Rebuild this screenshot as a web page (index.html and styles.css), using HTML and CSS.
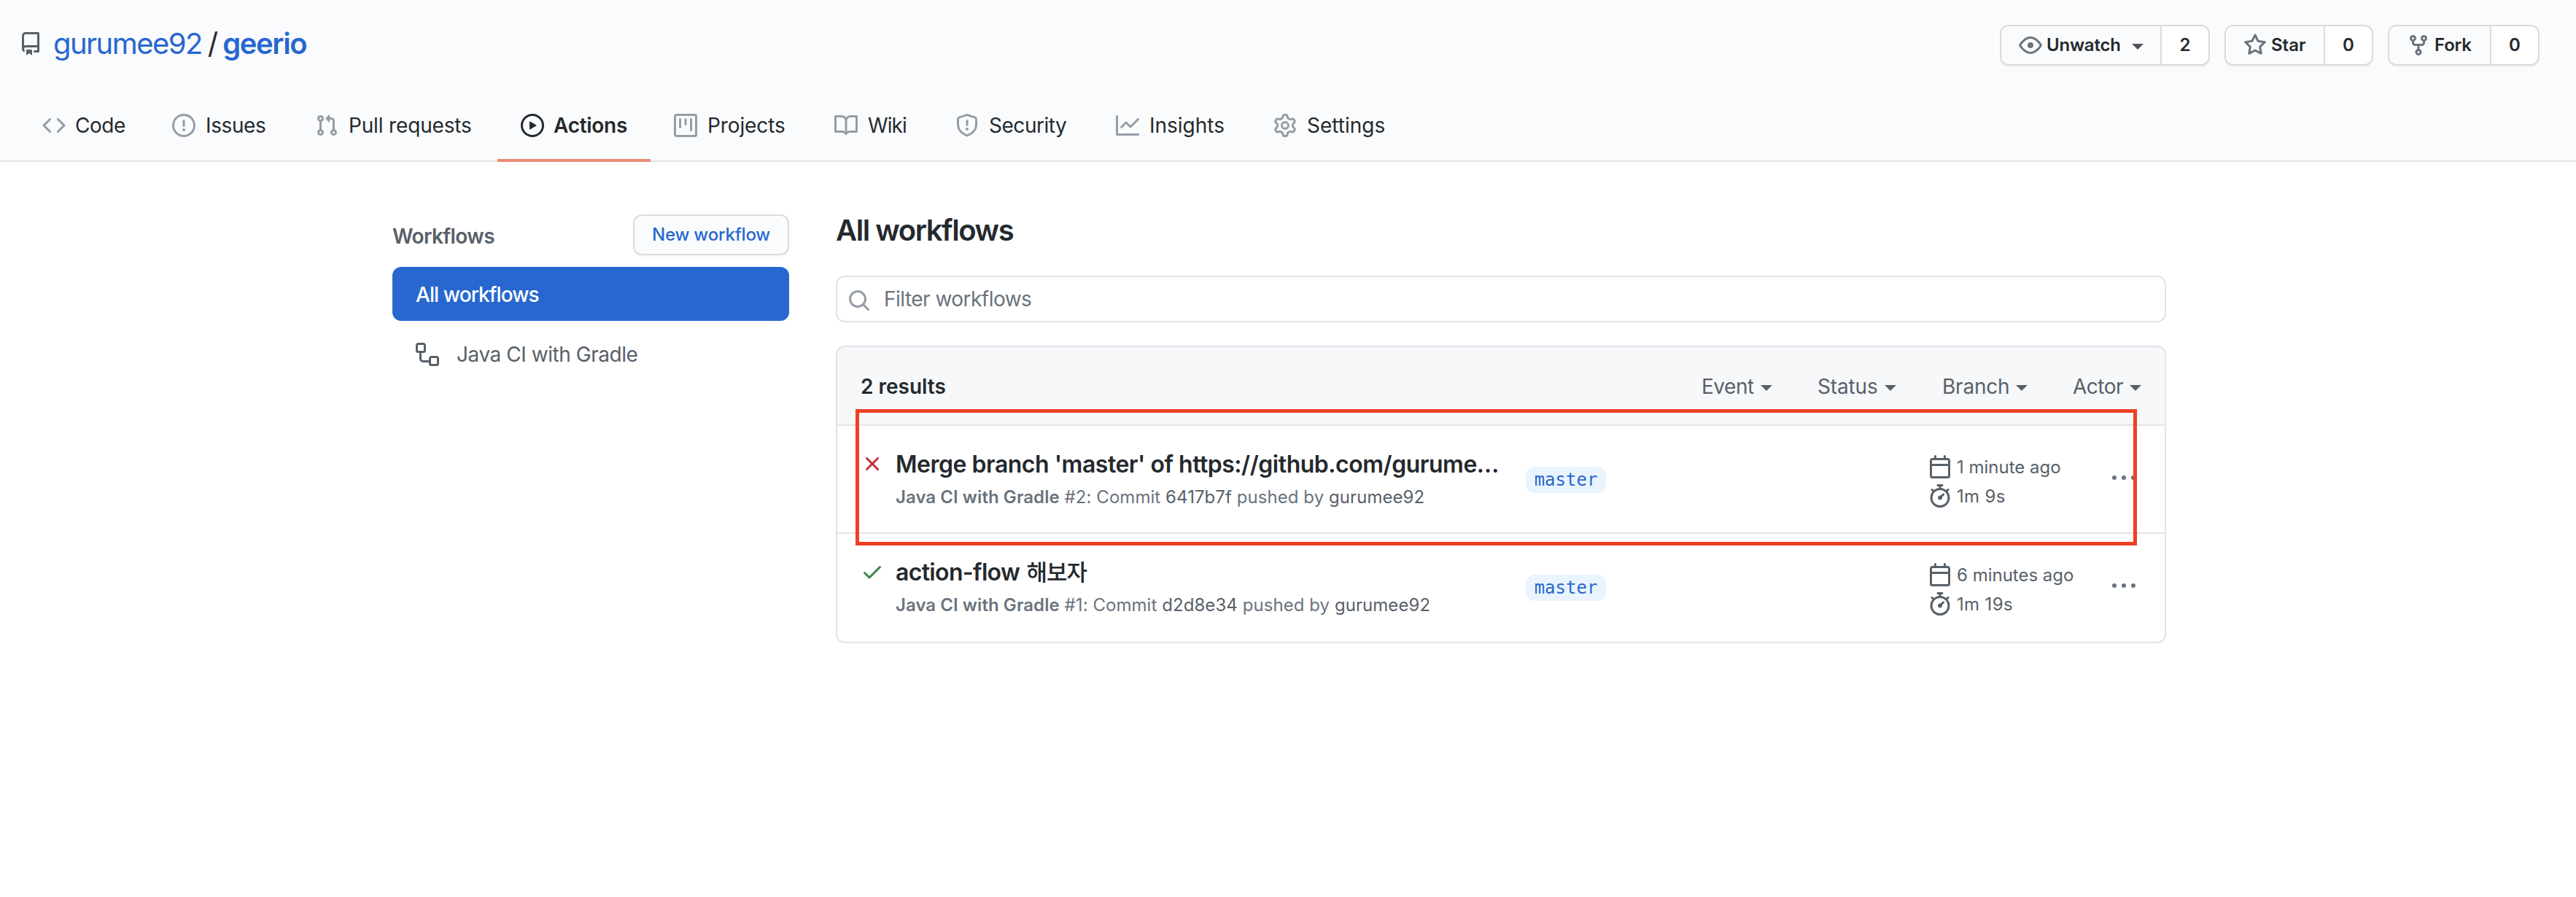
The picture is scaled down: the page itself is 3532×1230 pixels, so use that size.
FILE: index.html
```html
<!DOCTYPE html>
<html lang="en">
<head>
<meta charset="utf-8">
<title>Actions · gurumee92/geerio</title>
<link rel="stylesheet" href="styles.css">
</head>
<body>
<header class="repo-header">
  <div class="repo-top">
    <h1 class="repo-title">
      <svg class="icon" viewBox="0 0 16 16"><path fill-rule="evenodd" d="M2 2.5A2.5 2.5 0 014.5 0h8.75a.75.75 0 01.75.75v12.5a.75.75 0 01-.75.75h-2.5a.75.75 0 110-1.5h1.75v-2h-8a1 1 0 00-.714 1.7.75.75 0 01-1.072 1.05A2.495 2.495 0 012 11.5v-9zm10.5-1V9h-8c-.356 0-.694.074-1 .208V2.5a1 1 0 011-1h8zM5 12.25v3.25a.25.25 0 00.4.2l1.45-1.087a.25.25 0 01.3 0L8.6 15.7a.25.25 0 00.4-.2v-3.25a.25.25 0 00-.25-.25h-3.5a.25.25 0 00-.25.25z"/></svg>
      <a class="owner">gurumee92</a><span class="slash">/</span><a class="name">geerio</a>
    </h1>
    <div class="repo-actions">
      <div class="btn-pair">
        <button class="btn-main watch"><svg class="icon" viewBox="0 0 16 16"><path fill-rule="evenodd" d="M1.679 7.932c.412-.621 1.242-1.75 2.366-2.717C5.175 4.242 6.527 3.5 8 3.5c1.473 0 2.824.742 3.955 1.715 1.124.967 1.954 2.096 2.366 2.717a.119.119 0 010 .136c-.412.621-1.242 1.75-2.366 2.717C10.825 11.758 9.473 12.5 8 12.5c-1.473 0-2.824-.742-3.955-1.715C2.92 9.818 2.09 8.69 1.679 8.068a.119.119 0 010-.136zM8 2c-1.981 0-3.67.992-4.933 2.078C1.797 5.169.88 6.423.43 7.1a1.619 1.619 0 000 1.798c.45.678 1.367 1.932 2.637 3.024C4.329 13.008 6.019 14 8 14c1.981 0 3.67-.992 4.933-2.078 1.27-1.091 2.187-2.345 2.637-3.023a1.619 1.619 0 000-1.798c-.45-.678-1.367-1.932-2.637-3.023C11.671 2.992 9.981 2 8 2zm0 8a2 2 0 100-4 2 2 0 000 4z"/></svg><span>Unwatch</span><i class="caret"></i></button>
        <a class="btn-count">2</a>
      </div>
      <div class="btn-pair">
        <button class="btn-main star"><svg class="icon" viewBox="0 0 16 16"><path fill-rule="evenodd" d="M8 .25a.75.75 0 01.673.418l1.882 3.815 4.21.612a.75.75 0 01.416 1.279l-3.046 2.97.719 4.192a.75.75 0 01-1.088.791L8 12.347l-3.766 1.98a.75.75 0 01-1.088-.79l.72-4.194L.818 6.374a.75.75 0 01.416-1.28l4.21-.611L7.327.668A.75.75 0 018 .25zm0 2.445L6.615 5.5a.75.75 0 01-.564.41l-3.097.45 2.24 2.184a.75.75 0 01.216.664l-.528 3.084 2.769-1.456a.75.75 0 01.698 0l2.77 1.456-.53-3.084a.75.75 0 01.216-.664l2.24-2.183-3.096-.45a.75.75 0 01-.564-.41L8 2.694v.001z"/></svg><span>Star</span></button>
        <a class="btn-count">0</a>
      </div>
      <div class="btn-pair">
        <button class="btn-main fork"><svg class="icon" viewBox="0 0 16 16"><path fill-rule="evenodd" d="M5 3.25a.75.75 0 11-1.5 0 .75.75 0 011.5 0zm0 2.122a2.25 2.25 0 10-1.5 0v.878A2.25 2.25 0 005.75 8.5h1.5v2.128a2.251 2.251 0 101.5 0V8.5h1.5a2.25 2.25 0 002.25-2.25v-.878a2.25 2.25 0 10-1.5 0v.878a.75.75 0 01-.75.75h-4.5A.75.75 0 015 6.25v-.878zm3.75 7.378a.75.75 0 11-1.5 0 .75.75 0 011.5 0zm3-8.75a.75.75 0 100-1.5.75.75 0 000 1.5z"/></svg><span>Fork</span></button>
        <a class="btn-count">0</a>
      </div>
    </div>
  </div>
  <nav class="tabs">
    <a class="tab tab-code"><svg class="icon" viewBox="0 0 16 16"><path fill-rule="evenodd" d="M4.72 3.22a.75.75 0 011.06 1.06L2.06 8l3.72 3.72a.75.75 0 11-1.06 1.06L.47 8.53a.75.75 0 010-1.06l4.25-4.25zm6.56 0a.75.75 0 10-1.06 1.06L13.94 8l-3.72 3.72a.75.75 0 101.06 1.06l4.25-4.25a.75.75 0 000-1.06l-4.25-4.25z"/></svg><span>Code</span></a>
    <a class="tab tab-issues"><svg class="icon" viewBox="0 0 16 16"><path fill-rule="evenodd" d="M8 1.5a6.5 6.5 0 100 13 6.5 6.5 0 000-13zM0 8a8 8 0 1116 0A8 8 0 010 8zm9 3a1 1 0 11-2 0 1 1 0 012 0zm-.25-6.25a.75.75 0 00-1.5 0v3.5a.75.75 0 001.5 0v-3.5z"/></svg><span>Issues</span></a>
    <a class="tab tab-pulls"><svg class="icon" viewBox="0 0 16 16"><path fill-rule="evenodd" d="M7.177 3.073L9.573.677A.25.25 0 0110 .854v4.792a.25.25 0 01-.427.177L7.177 3.427a.25.25 0 010-.354zM3.75 2.5a.75.75 0 100 1.5.75.75 0 000-1.5zm-2.25.75a2.25 2.25 0 113 2.122v5.256a2.251 2.251 0 11-1.5 0V5.372A2.25 2.25 0 011.5 3.25zM11 2.5h-1V4h1a1 1 0 011 1v5.628a2.251 2.251 0 101.5 0V5A2.5 2.5 0 0011 2.5zm1 10.25a.75.75 0 111.5 0 .75.75 0 01-1.5 0zM3.75 12a.75.75 0 100 1.5.75.75 0 000-1.5z"/></svg><span>Pull requests</span></a>
    <a class="tab tab-actions selected"><svg class="icon" viewBox="0 0 16 16"><path fill-rule="evenodd" d="M1.5 8a6.5 6.5 0 1113 0 6.5 6.5 0 01-13 0zM8 0a8 8 0 100 16A8 8 0 008 0zM6.379 5.227A.25.25 0 006 5.442v5.117a.25.25 0 00.379.214l4.264-2.559a.25.25 0 000-.428L6.379 5.227z"/></svg><span>Actions</span></a>
    <a class="tab tab-projects"><svg class="icon" viewBox="0 0 16 16"><path fill-rule="evenodd" d="M1.75 0A1.75 1.75 0 000 1.75v12.5C0 15.216.784 16 1.75 16h12.5A1.75 1.75 0 0016 14.25V1.75A1.75 1.75 0 0014.25 0H1.75zM1.5 1.75a.25.25 0 01.25-.25h12.5a.25.25 0 01.25.25v12.5a.25.25 0 01-.25.25H1.75a.25.25 0 01-.25-.25V1.75zM11.75 3a.75.75 0 00-.75.75v7.5a.75.75 0 001.5 0v-7.5a.75.75 0 00-.75-.75zm-8.25.75a.75.75 0 011.5 0v5.5a.75.75 0 01-1.5 0v-5.5zM8 3a.75.75 0 00-.75.75v3.5a.75.75 0 001.5 0v-3.5A.75.75 0 008 3z"/></svg><span>Projects</span></a>
    <a class="tab tab-wiki"><svg class="icon" viewBox="0 0 16 16"><path fill-rule="evenodd" d="M0 1.75A.75.75 0 01.75 1h4.253c1.227 0 2.317.59 3 1.501A3.744 3.744 0 0111.006 1h4.245a.75.75 0 01.75.75v10.5a.75.75 0 01-.75.75h-4.507a2.25 2.25 0 00-1.591.659l-.622.621a.75.75 0 01-1.06 0l-.622-.621A2.25 2.25 0 005.258 13H.75a.75.75 0 01-.75-.75V1.75zm8.755 3a2.25 2.25 0 012.25-2.25H14.5v9h-3.757c-.71 0-1.4.201-1.992.572l.004-7.322zm-1.504 7.324l.004-5.073-.002-2.253A2.25 2.25 0 005.003 2.5H1.5v9h3.757a3.75 3.75 0 011.994.574z"/></svg><span>Wiki</span></a>
    <a class="tab tab-security"><svg class="icon" viewBox="0 0 16 16"><path fill-rule="evenodd" d="M7.467.133a1.75 1.75 0 011.066 0l5.25 1.68A1.75 1.75 0 0115 3.48V7c0 1.566-.32 3.182-1.303 4.682-.983 1.498-2.585 2.813-5.032 3.855a1.7 1.7 0 01-1.33 0c-2.447-1.042-4.049-2.357-5.032-3.855C1.32 10.182 1 8.566 1 7V3.48a1.75 1.75 0 011.217-1.667l5.25-1.68zm.61 1.429a.25.25 0 00-.153 0l-5.25 1.68a.25.25 0 00-.174.238V7c0 1.358.275 2.666 1.057 3.86.784 1.194 2.121 2.34 4.366 3.297a.2.2 0 00.154 0c2.245-.956 3.582-2.104 4.366-3.298C13.225 9.666 13.5 8.36 13.5 7V3.48a.25.25 0 00-.174-.237l-5.25-1.68zM9 10.5a1 1 0 11-2 0 1 1 0 012 0zm-.25-5.75a.75.75 0 10-1.5 0v3a.75.75 0 001.5 0v-3z"/></svg><span>Security</span></a>
    <a class="tab tab-insights"><svg class="icon" viewBox="0 0 16 16"><path fill-rule="evenodd" d="M1.5 1.75a.75.75 0 00-1.5 0v12.5c0 .414.336.75.75.75h14.5a.75.75 0 000-1.5H1.5V1.75zm14.28 2.53a.75.75 0 00-1.06-1.06L10 7.94 7.53 5.47a.75.75 0 00-1.06 0L3.22 8.72a.75.75 0 001.06 1.06L7 7.06l2.47 2.47a.75.75 0 001.06 0l5.25-5.25z"/></svg><span>Insights</span></a>
    <a class="tab tab-settings"><svg class="icon" viewBox="0 0 16 16"><path fill-rule="evenodd" d="M7.429 1.525a6.593 6.593 0 011.142 0c.036.003.108.036.137.146l.289 1.105c.147.56.55.967.997 1.189.174.086.341.183.501.29.417.278.97.423 1.53.27l1.102-.303c.11-.03.175.016.195.046.219.31.41.641.573.989.014.031.022.11-.059.19l-.815.806c-.411.406-.562.957-.53 1.456a4.588 4.588 0 010 .582c-.032.499.119 1.05.53 1.456l.815.806c.08.08.073.159.059.19a6.494 6.494 0 01-.573.99c-.02.029-.086.074-.195.045l-1.103-.303c-.559-.153-1.112-.008-1.529.27-.16.107-.327.204-.5.29-.449.222-.851.628-.998 1.189l-.289 1.105c-.029.11-.101.143-.137.146a6.613 6.613 0 01-1.142 0c-.036-.003-.108-.037-.137-.146l-.289-1.105c-.147-.56-.55-.967-.997-1.189a4.502 4.502 0 01-.501-.29c-.417-.278-.97-.423-1.53-.27l-1.102.303c-.11.03-.175-.016-.195-.046a6.492 6.492 0 01-.573-.989c-.014-.031-.022-.11.059-.19l.815-.806c.411-.406.562-.957.53-1.456a4.587 4.587 0 010-.582c.032-.499-.119-1.05-.53-1.456l-.815-.806c-.08-.08-.073-.159-.059-.19a6.44 6.44 0 01.573-.99c.02-.029.086-.075.195-.045l1.103.303c.559.153 1.112.008 1.529-.27.16-.107.327-.204.5-.29.449-.222.851-.628.998-1.189l.289-1.105c.029-.11.101-.143.137-.146zM8 0c-.236 0-.47.01-.701.03-.743.065-1.29.615-1.458 1.261l-.29 1.106c-.017.066-.078.158-.211.224a5.994 5.994 0 00-.668.386c-.123.082-.233.09-.3.071L3.27 2.776c-.644-.177-1.392.02-1.82.63a7.977 7.977 0 00-.704 1.217c-.315.675-.111 1.422.363 1.891l.815.806c.05.048.098.147.088.294a6.084 6.084 0 000 .772c.01.147-.038.246-.088.294l-.815.806c-.474.469-.678 1.216-.363 1.891.2.428.436.835.704 1.218.428.609 1.176.806 1.82.63l1.103-.303c.066-.019.176-.011.299.071.213.143.436.272.668.386.133.066.194.158.212.224l.289 1.106c.169.646.715 1.196 1.458 1.26a8.094 8.094 0 001.402 0c.743-.064 1.29-.614 1.458-1.26l.29-1.106c.017-.066.078-.158.211-.224a5.98 5.98 0 00.668-.386c.123-.082.233-.09.3-.071l1.102.302c.644.177 1.392-.02 1.82-.63.268-.382.505-.789.704-1.217.315-.675.111-1.422-.364-1.891l-.814-.806c-.05-.048-.098-.147-.088-.294a6.1 6.1 0 000-.772c-.01-.147.039-.246.088-.294l.814-.806c.475-.469.679-1.216.364-1.891a7.992 7.992 0 00-.704-1.218c-.428-.609-1.176-.806-1.82-.63l-1.103.303c-.066.019-.176.011-.299-.071a5.991 5.991 0 00-.668-.386c-.133-.066-.194-.158-.212-.224L10.16 1.29C9.99.645 9.444.095 8.701.031A8.094 8.094 0 008 0zm1.5 8a1.5 1.5 0 11-3 0 1.5 1.5 0 013 0zM11 8a3 3 0 11-6 0 3 3 0 016 0z"/></svg><span>Settings</span></a>
  </nav>
</header>

<div class="layout">
  <aside class="sidebar">
    <div class="sidebar-head"><h3 class="side-title">Workflows</h3><button class="new-btn"><span>New workflow</span></button></div>
    <a class="side-item active"><span>All workflows</span></a>
    <a class="side-item sub"><svg class="icon" viewBox="0 0 16 16"><path fill-rule="evenodd" d="M0 1.75C0 .784.784 0 1.75 0h3.5C6.216 0 7 .784 7 1.75v3.5A1.75 1.75 0 015.25 7H4v4a1 1 0 001 1h4v-1.25C9 9.784 9.784 9 10.75 9h3.5c.966 0 1.75.784 1.75 1.75v3.5A1.75 1.75 0 0114.25 16h-3.5A1.75 1.75 0 019 14.25v-.75H5A2.5 2.5 0 012.5 11V7h-.75A1.75 1.75 0 010 5.25v-3.5zm1.75-.25a.25.25 0 00-.25.25v3.5c0 .138.112.25.25.25h3.5a.25.25 0 00.25-.25v-3.5a.25.25 0 00-.25-.25h-3.5zm9 9a.25.25 0 00-.25.25v3.5c0 .138.112.25.25.25h3.5a.25.25 0 00.25-.25v-3.5a.25.25 0 00-.25-.25h-3.5z"/></svg><span>Java CI with Gradle</span></a>
  </aside>
  <main class="content">
    <h2 class="page-title">All workflows</h2>
    <div class="search"><svg class="icon" viewBox="0 0 16 16"><path fill-rule="evenodd" d="M11.5 7a4.499 4.499 0 11-8.998 0A4.499 4.499 0 0111.5 7zm-.82 4.74a6 6 0 111.06-1.06l3.04 3.04a.75.75 0 11-1.06 1.06l-3.04-3.04z"/></svg><span>Filter workflows</span></div>
    <section class="runs">
      <div class="runs-head">
        <strong class="results">2 results</strong>
        <div class="filters">
          <a class="filter event"><span>Event</span><i class="caret"></i></a>
          <a class="filter status"><span>Status</span><i class="caret"></i></a>
          <a class="filter branch-filter"><span>Branch</span><i class="caret"></i></a>
          <a class="filter actor"><span>Actor</span><i class="caret"></i></a>
        </div>
      </div>
      <div class="run">
        <svg class="icon state failed" viewBox="0 0 16 16"><path fill-rule="evenodd" d="M3.72 3.72a.75.75 0 011.06 0L8 6.94l3.22-3.22a.75.75 0 111.06 1.06L9.06 8l3.22 3.22a.75.75 0 11-1.06 1.06L8 9.06l-3.22 3.22a.75.75 0 01-1.06-1.06L6.94 8 3.72 4.78a.75.75 0 010-1.06z"/></svg>
        <div class="run-info">
          <a class="run-title">Merge branch 'master' of https://github.com/gurume…</a>
          <div class="run-sub"><b>Java CI with Gradle</b> #2: Commit <a>6417b7f</a> pushed by <a>gurumee92</a></div>
        </div>
        <a class="branch">master</a>
        <div class="times">
          <div class="time"><svg class="icon" viewBox="0 0 16 16"><path fill-rule="evenodd" d="M4.75 0a.75.75 0 01.75.75V2h5V.75a.75.75 0 011.5 0V2h1.25c.966 0 1.75.784 1.75 1.75v10.5A1.75 1.75 0 0113.25 16H2.75A1.75 1.75 0 011 14.25V3.75C1 2.784 1.784 2 2.75 2H4V.75A.75.75 0 014.75 0zm0 3.5h8.5a.25.25 0 01.25.25V6h-11V3.75a.25.25 0 01.25-.25h2zm-2.25 4v6.75c0 .138.112.25.25.25h10.5a.25.25 0 00.25-.25V7.5h-11z"/></svg><span>1 minute ago</span></div>
          <div class="time duration"><svg class="icon" viewBox="0 0 16 16"><path fill-rule="evenodd" d="M5.75.75A.75.75 0 016.5 0h3a.75.75 0 010 1.5h-.75v1l-.001.041a6.718 6.718 0 013.464 1.435l.007-.006.75-.75a.75.75 0 111.06 1.06l-.75.75-.006.007a6.75 6.75 0 11-10.548 0L2.72 5.03l-.75-.75a.75.75 0 011.06-1.06l.75.75.007.006A6.718 6.718 0 017.25 2.541V1.5H6.5a.75.75 0 01-.75-.75zM8 14.5A5.25 5.25 0 108 4a5.25 5.25 0 000 10.500zm.389-6.7l1.33-1.33a.75.75 0 111.061 1.06L9.45 8.861A1.502 1.502 0 018 10.75a1.5 1.5 0 11.389-2.95z"/></svg><span>1m 9s</span></div>
        </div>
        <svg class="icon kebab" viewBox="0 0 16 16"><circle cx="1.5" cy="7.5" r="1.5"/><circle cx="8" cy="7.5" r="1.5"/><circle cx="14.5" cy="7.5" r="1.5"/></svg>
      </div>
      <div class="run">
        <svg class="icon state passed" viewBox="0 0 16 16"><path fill-rule="evenodd" d="M13.78 4.22a.75.75 0 010 1.06l-7.25 7.25a.75.75 0 01-1.06 0L2.22 9.28a.75.75 0 011.06-1.06L6 10.94l6.72-6.72a.75.75 0 011.06 0z"/></svg>
        <div class="run-info">
          <a class="run-title mixed">action-flow <span class="ko" lang="ko">해보자</span></a>
          <div class="run-sub"><b>Java CI with Gradle</b> #1: Commit <a>d2d8e34</a> pushed by <a>gurumee92</a></div>
        </div>
        <a class="branch">master</a>
        <div class="times">
          <div class="time"><svg class="icon" viewBox="0 0 16 16"><path fill-rule="evenodd" d="M4.75 0a.75.75 0 01.75.75V2h5V.75a.75.75 0 011.5 0V2h1.25c.966 0 1.75.784 1.75 1.75v10.5A1.75 1.75 0 0113.25 16H2.75A1.75 1.75 0 011 14.25V3.75C1 2.784 1.784 2 2.75 2H4V.75A.75.75 0 014.75 0zm0 3.5h8.5a.25.25 0 01.25.25V6h-11V3.75a.25.25 0 01.25-.25h2zm-2.25 4v6.75c0 .138.112.25.25.25h10.5a.25.25 0 00.25-.25V7.5h-11z"/></svg><span>6 minutes ago</span></div>
          <div class="time duration"><svg class="icon" viewBox="0 0 16 16"><path fill-rule="evenodd" d="M5.75.75A.75.75 0 016.5 0h3a.75.75 0 010 1.5h-.75v1l-.001.041a6.718 6.718 0 013.464 1.435l.007-.006.75-.75a.75.75 0 111.06 1.06l-.75.75-.006.007a6.75 6.75 0 11-10.548 0L2.72 5.03l-.75-.75a.75.75 0 011.06-1.06l.75.75.007.006A6.718 6.718 0 017.25 2.541V1.5H6.5a.75.75 0 01-.75-.75zM8 14.5A5.25 5.25 0 108 4a5.25 5.25 0 000 10.500zm.389-6.7l1.33-1.33a.75.75 0 111.061 1.06L9.45 8.861A1.502 1.502 0 018 10.75a1.5 1.5 0 11.389-2.95z"/></svg><span>1m 19s</span></div>
        </div>
        <svg class="icon kebab" viewBox="0 0 16 16"><circle cx="1.5" cy="7.5" r="1.5"/><circle cx="8" cy="7.5" r="1.5"/><circle cx="14.5" cy="7.5" r="1.5"/></svg>
      </div>
      <div class="highlight"></div>
    </section>
  </main>
</div>
</body>
</html>
```
FILE: styles.css
```css
* { box-sizing: border-box; }
body { margin: 0; min-height: 1230px; background: #fff; color: #24292e; font: 28px/42px Inter, "Noto Sans CJK KR", sans-serif; }
h1, h2, h3 { margin: 0; }
button { font: inherit; color: inherit; }
.icon { width: 32px; height: 32px; flex: none; fill: currentColor; display: block; }
.caret { width: 0; height: 0; border: 8px solid transparent; border-top-color: currentColor; border-bottom: 0; }

.repo-header { height: 222px; background: #fafbfc; border-bottom: 2px solid #e1e4e8; display: flex; flex-direction: column; justify-content: space-between; }
.repo-top { display: flex; justify-content: space-between; padding: 34px 50px 0 26px; }
.repo-title { display: flex; align-items: center; height: 52px; font-size: 40px; font-weight: 400; color: #24292e; }
.repo-title .icon { color: #586069; margin-right: 15px; }
.owner, .name { color: #2767cf; }
.owner { letter-spacing: -1.55px; }
.name { font-weight: 600; letter-spacing: -1.4px; }
.slash { margin: 0 6px 0 8px; }

.repo-actions { display: flex; gap: 20px; }
.btn-pair { display: flex; height: 56px; border: 2px solid #d9dbdd; border-radius: 12px; background: #fff; box-shadow: 0 2px 0 rgba(27, 31, 35, .04); overflow: hidden; font-size: 24px; font-weight: 600; }
.btn-main { display: flex; align-items: center; padding: 0 0 0 24px; border: 0; border-right: 2px solid #d9dbdd; background: #fafbfc; letter-spacing: -.2px; }
.btn-main .icon { color: #6a737d; margin-right: 6px; }
.btn-main .caret { color: #4f5256; margin-left: 15px; margin-top: 4px; }
.watch { width: 220px; }
.star { width: 136px; letter-spacing: 0; }
.fork { width: 140px; }
.btn-count { width: 64px; line-height: 52px; text-align: center; }

.tabs { display: flex; padding-left: 26px; height: 100px; margin-bottom: -2px; }
.tab { display: flex; align-items: center; gap: 14px; padding: 4px 0 0 32px; border-bottom: 4px solid transparent; white-space: nowrap; }
.tab .icon { color: #959da5; }
.tab.selected { font-weight: 600; border-bottom-color: #ea8771; }
.tab.selected .icon { color: inherit; }
.tab-code { width: 178px; gap: 13px; letter-spacing: -.46px; }
.tab-issues { width: 196px; letter-spacing: -.39px; }
.tab-pulls { width: 282px; letter-spacing: -.16px; }
.tab-actions { width: 210px; gap: 13px; letter-spacing: -.28px; }
.tab-projects { width: 220px; letter-spacing: -.11px; }
.tab-wiki { width: 166px; letter-spacing: -.91px; }
.tab-security { width: 220px; letter-spacing: -.47px; }
.tab-insights { width: 216px; }
.tab-settings { width: 218px; }

.layout { display: grid; grid-template-columns: 544px 1824px; column-gap: 64px; padding: 72px 0 0 538px; }
.sidebar-head { display: flex; justify-content: space-between; height: 72px; }
.side-title { font-size: 28px; line-height: 60px; font-weight: 600; color: #586069; letter-spacing: -.6px; }
.new-btn { width: 214px; height: 56px; padding: 0; border: 2px solid #d9dbdd; border-radius: 12px; background: #fafbfc; box-shadow: 0 2px 0 rgba(27, 31, 35, .04); color: #2767cf; font-size: 24px; line-height: 50px; font-weight: 500; letter-spacing: -.2px; }
.side-item { display: flex; align-items: center; height: 74px; padding-left: 32px; border-radius: 12px; }
.side-item.active { background: #2767cf; color: #fff; font-weight: 500; letter-spacing: -.9px; padding-top: 2px; }
.side-item.sub { margin-top: 9px; color: #586069; gap: 24px; letter-spacing: -.45px; }

.page-title { height: 84px; padding-top: 1px; font-size: 40px; line-height: 42px; font-weight: 600; letter-spacing: -1.45px; }
.search { display: flex; align-items: center; gap: 18px; height: 64px; padding: 0 0 0 14px; border: 2px solid #e1e4e8; border-radius: 12px; color: #6a737d; letter-spacing: -.53px; }
.search .icon { color: #959da5; margin-top: 4px; }
.runs { position: relative; margin-top: 32px; border: 2px solid #e1e4e8; border-radius: 12px; height: 408px; }
.runs-head { display: flex; justify-content: space-between; height: 108px; padding: 33px 32px 0; background: #f6f8fa; border-bottom: 2px solid #e1e4e8; border-radius: 10px 10px 0 0; }
.results { font-weight: 600; }
.filters { display: flex; color: #586069; }
.filter { display: flex; align-items: center; height: 42px; }
.filter .caret { margin-left: 9px; margin-top: 4px; }
.event { width: 159px; letter-spacing: -.47px; }
.status { width: 171px; letter-spacing: -.14px; }
.branch-filter { width: 179px; letter-spacing: -.22px; }
.actor { width: 94px; letter-spacing: -.5px; }

.run { display: grid; grid-template-columns: 48px 864px 552px 252px 32px; height: 148px; padding-left: 32px; align-items: start; border-bottom: 2px solid #e1e4e8; }
.run + .run { height: 146px; border-bottom: 0; }
.state { margin-top: 36px; }
.failed { color: #c2303a; }
.passed { color: #3a8644; }
.run-info { padding-top: 29px; white-space: nowrap; }
.run-title { display: block; font-size: 32px; line-height: 48px; font-weight: 600; letter-spacing: -.49px; }
.run-title.mixed { letter-spacing: -.65px; }
.ko { margin-left: 2px; font-size: 31px; line-height: 1; font-weight: 500; letter-spacing: -1.1px; }
.run-sub { font-size: 24px; line-height: 42px; color: #6a737d; letter-spacing: .06px; }
.run-sub b { font-weight: 600; }
.run-sub a { color: #586069; }
.branch { justify-self: start; margin-top: 56px; width: 110px; height: 36px; border-radius: 12px; background: #eaf4fe; color: #2767cf; text-align: center; font: 24px/36px "DejaVu Sans Mono", monospace; }
.times { padding-top: 36px; color: #586069; font-size: 24px; }
.time { display: flex; align-items: center; gap: 7px; height: 40px; }
.time span { padding-top: 2px; }
.duration { letter-spacing: .35px; }
.kebab { margin-top: 56px; color: #6a737d; }
.highlight { position: absolute; left: 25px; top: 85px; width: 1757px; height: 187px; border: 5px solid #ee4025; }
```
